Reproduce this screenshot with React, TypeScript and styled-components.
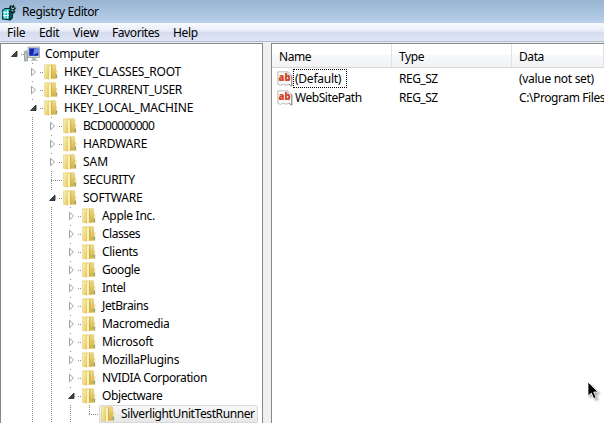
import React from "react";
import styled, { createGlobalStyle, css } from "styled-components";

const GlobalStyle = createGlobalStyle`
  html, body { margin: 0; padding: 0; overflow: hidden; }
  body { font: 12px/18px "Noto Sans", "Open Sans", sans-serif; color: #000; background: #fff; }
  svg { display: block; flex: none; }
`;

const Window = styled.div`
  position: relative;
  display: flex;
  flex-direction: column;
  width: 604px;
  height: 423px;
  overflow: hidden;
`;

const TitleBar = styled.header`
  display: flex;
  align-items: center;
  gap: 5px;
  height: 23px;
  padding: 1px 0 0 1px;
  box-sizing: border-box;
  background: linear-gradient(#98b4d2, #b9d1ea);
`;

const MenuBar = styled.nav`
  display: flex;
  height: 19px;
  padding-left: 7px;
  background: linear-gradient(#fafbfe 0, #e8ecf7 45%, #d6dcee 50%, #dee5f6 100%);
  border-bottom: 1px solid #b6bccc;
  box-sizing: border-box;
`;

const MenuItem = styled.span<{ $w: number; $ls: number }>`
  flex: none;
  width: ${(p) => p.$w}px;
  line-height: 20px;
  letter-spacing: ${(p) => p.$ls}px;
`;

const Text = styled.span<{ $ls?: number }>`
  white-space: pre;
  letter-spacing: ${(p) => p.$ls ?? 0}px;
`;

const Panes = styled.main`
  display: flex;
  flex: 1;
  min-height: 0;
  gap: 8px;
  background: #f0f0f0;
  padding-top: 1px;
`;

const pane = css`
  background: #fff;
  border: 1px solid #828790;
  border-bottom: 0;
  box-sizing: border-box;
  overflow: hidden;
`;

const TreePane = styled.section`
  ${pane}
  width: 263px;
  flex: none;
  padding-top: 1px;
`;

const ListPane = styled.section`
  ${pane}
  flex: 1;
  border-right: 0;
`;

const Row = styled.div`
  display: flex;
  height: 18px;
  padding-left: 3px;
`;

const dotsDown = "repeating-linear-gradient(to bottom, #8c8c8c 0 1px, transparent 1px 2px)";
const dotsAcross = "repeating-linear-gradient(to right, #8c8c8c 0 1px, transparent 1px 2px)";

const Guide = styled.span<{ $line?: boolean; $elbow?: boolean }>`
  flex: none;
  display: flex;
  width: 19px;
  height: 18px;
  background: ${(p) => (p.$line ? dotsDown : "none")} 9px 0 / 1px ${(p) => (p.$elbow ? "10px" : "18px")} no-repeat;
`;

const ToggleBox = styled.span`
  flex: none;
  width: 17px;
  height: 15px;
  margin: 2px 0 1px;
  padding: 1px 0 0 7px;
  box-sizing: border-box;
  background: #fff;
`;

const Stub = styled.span<{ $wide?: boolean }>`
  flex: none;
  width: ${(p) => (p.$wide ? 11 : 3)}px;
  margin: 9px 0 0 ${(p) => (p.$wide ? -10 : -2)}px;
  height: 1px;
  background: ${dotsAcross};
`;

const NodeIcon = styled.span<{ $root?: boolean }>`
  flex: none;
  width: ${(p) => (p.$root ? 17 : 16)}px;
  margin-left: ${(p) => (p.$root ? 0 : 1)}px;
  padding-top: 1px;
`;

const NodeLabel = styled.span<{ $ls: number }>`
  flex: none;
  height: 18px;
  padding: 0 3px 0 4px;
  box-sizing: border-box;
  white-space: pre;
  letter-spacing: ${(p) => p.$ls}px;
`;

const Entry = styled.span<{ $selected?: boolean }>`
  display: flex;
  height: 18px;
  border-radius: 2px;
  ${(p) =>
    p.$selected &&
    css`
      margin-left: -1px;
      padding-left: 1px;
      background: linear-gradient(#f9f9f9, #e6e6e6);
      box-shadow: inset 0 0 0 1px #d9d9d9;
    `}
`;

const ListHeader = styled.div`
  display: grid;
  grid-template-columns: 120px 120px 1fr;
  height: 24px;
  margin-bottom: 1px;
  background: linear-gradient(#fff 0 45%, #f7f8fa 50%, #f1f2f4);
  border-bottom: 1px solid #d5d5d5;
  box-sizing: border-box;
`;

const HeaderCell = styled.div`
  padding: 4px 0 0 7px;
  border-right: 1px solid #e0e2e5;
  letter-spacing: -0.4px;
`;

const ListRow = styled.div`
  display: grid;
  grid-template-columns: 127px 120px 1fr;
  height: 19px;
  align-items: center;
  white-space: nowrap;
`;

const NameCell = styled.div`
  display: flex;
  align-items: center;
  padding-left: 5px;
`;

const ValueName = styled.span<{ $focused?: boolean; $ls: number }>`
  margin-left: 1px;
  padding: 0 5px 0 1px;
  line-height: 17px;
  letter-spacing: ${(p) => p.$ls}px;
  outline: ${(p) => (p.$focused ? "1px dotted #000" : "none")};
`;

const Pointer = styled.svg`
  position: absolute;
  left: 587px;
  top: 381px;
  filter: drop-shadow(2px 2px 1px rgba(0, 0, 0, 0.35));
`;

const RegistryIcon = () => (
  <svg width="16" height="17" viewBox="0 0 16 17">
    <path d="M1 6 4 4 8 4 9 1 11 2 13 0.5 13.5 3 15.5 4 13.5 6 14.5 8 12 10 12 14 9.5 16.5 1 15.5Z" fill="#062c30" />
    <path d="M1.5 7 4 5H9L8 8V15L2 14.5Z" fill="#2fc3c3" />
    <path d="M2 8.5H8M2 11.5H8M4 7v7.5M6.5 6v8.5" stroke="#e2ffff" fill="none" strokeWidth=".9" />
    <path d="M10 3.5 12 5 13 3.5M10.5 6.5l2 .5" stroke="#c9f2f2" fill="none" />
    <path d="M10 9v5" stroke="#0f8f92" />
  </svg>
);

const ComputerIcon = () => (
  <svg width="17" height="16" viewBox="0 0 17 16">
    <path d="M.5 5.5 2.5 4.5 3.5 5.5V15H.5Z" fill="#b8c2c0" stroke="#76837f" strokeWidth=".6" />
    <path d="M1.5 7.5h1" stroke="#52c66a" />
    <path d="M4 1h11.5v10.5H4z" fill="#d6d9d4" stroke="#9a9f9c" strokeWidth=".8" />
    <path d="M5.2 2.3h9.2v7.5H5.2z" fill="#1226b4" />
    <path d="M10.5 2.3h3.9v4.2L9 9Z" fill="#6d8bef" />
    <path d="M8 11.8h4v1.4l2.5 1.6H6.5L8 13.2Z" fill="#b4b9b5" />
  </svg>
);

const FolderIcon = () => (
  <svg width="14" height="16" viewBox="0 0 14 16">
    <defs>
      <linearGradient id="folderFront" x2="1" y2=".6">
        <stop stopColor="#fbf3b8" />
        <stop offset="1" stopColor="#e6ca62" />
      </linearGradient>
      <linearGradient id="folderBack" x2=".4" y2="1">
        <stop stopColor="#f6e9a0" />
        <stop offset="1" stopColor="#d9b443" />
      </linearGradient>
    </defs>
    <path d="M5 .8 11 .3 11.8 1.5V6L13 7v7.5H5Z" fill="url(#folderBack)" stroke="#dcc162" strokeWidth=".4" />
    <path d="M.5.8h4.3l.9 1.2v12.6l-1 .6L.5 14.3Z" fill="url(#folderFront)" stroke="#dec56b" strokeWidth=".5" />
    <path d="M5 2 7.2 1.2V14.6L5 15.6Z" fill="#fbf2c0" />
    <path d="M7.7 1.2v13.6" stroke="#c9a640" strokeWidth=".9" />
    <path d="M12.4 7.5v3" stroke="#fff6d2" strokeWidth=".9" />
    <path d="M12.4 10.8v2.8" stroke="#48a6d2" strokeWidth=".9" />
  </svg>
);

const StringIcon = () => (
  <svg width="16" height="16" viewBox="0 0 16 16">
    <path d="M.8.8H11L14.8 4.2v11l-3-1.8L9 14.2l-2.6-1-2.8 1.2-2.8-1Z" fill="#f8f8f8" stroke="#bcbcbc" />
    <path d="M14.8 4.5v10.7l-3-2" fill="none" stroke="#8f8f8f" />
    <path d="M11 1v3.2h3.6" fill="#fff" stroke="#a6a6a6" strokeWidth=".8" />
    <text
      x="1.5"
      y="10"
      fontFamily="Open Sans, Noto Sans, sans-serif"
      fontWeight="800"
      fontSize="10"
      textLength="12"
      lengthAdjust="spacingAndGlyphs"
      fill="#d5401f"
    >
      ab
    </text>
  </svg>
);

const OpenToggle = () => (
  <svg width="8" height="12" viewBox="0 0 8 12">
    <path d="M6 3v5.5H.5Z" fill="#444" stroke="#222" strokeWidth=".8" />
  </svg>
);

const ClosedToggle = () => (
  <svg width="8" height="12" viewBox="0 0 8 12">
    <path d="M1.5 2.2v7.6l4-3.8Z" fill="#fff" stroke="#a0a0a0" />
  </svg>
);

type Node = { label: string; level: number; state: "open" | "closed" | "leaf"; ls: number };

const nodes: Node[] = [
  { label: "Computer", level: 0, state: "open", ls: -0.32 },
  { label: "HKEY_CLASSES_ROOT", level: 1, state: "closed", ls: -0.24 },
  { label: "HKEY_CURRENT_USER", level: 1, state: "closed", ls: -0.34 },
  { label: "HKEY_LOCAL_MACHINE", level: 1, state: "open", ls: -0.16 },
  { label: "BCD00000000", level: 2, state: "closed", ls: -0.72 },
  { label: "HARDWARE", level: 2, state: "closed", ls: -0.12 },
  { label: "SAM", level: 2, state: "closed", ls: 0 },
  { label: "SECURITY", level: 2, state: "leaf", ls: -0.37 },
  { label: "SOFTWARE", level: 2, state: "open", ls: -0.25 },
  { label: "Apple Inc.", level: 3, state: "closed", ls: -0.3 },
  { label: "Classes", level: 3, state: "closed", ls: -0.5 },
  { label: "Clients", level: 3, state: "closed", ls: -0.28 },
  { label: "Google", level: 3, state: "closed", ls: -0.45 },
  { label: "Intel", level: 3, state: "closed", ls: -0.45 },
  { label: "JetBrains", level: 3, state: "closed", ls: -0.4 },
  { label: "Macromedia", level: 3, state: "closed", ls: -0.3 },
  { label: "Microsoft", level: 3, state: "closed", ls: -0.22 },
  { label: "MozillaPlugins", level: 3, state: "closed", ls: -0.28 },
  { label: "NVIDIA Corporation", level: 3, state: "closed", ls: -0.39 },
  { label: "Objectware", level: 3, state: "open", ls: -0.4 },
  { label: "SilverlightUnitTestRunner", level: 4, state: "leaf", ls: -0.4 },
];

const menus: [string, number, number][] = [
  ["File", 32, -0.2],
  ["Edit", 34, -0.3],
  ["View", 39, -0.1],
  ["Favorites", 61, -0.42],
  ["Help", 40, -0.3],
];

const TreeRow = ({ node }: { node: Node }) => {
  const { label, level, state, ls } = node;
  const selected = level === 4;
  return (
    <Row>
      {Array.from({ length: level }, (_, i) => (
        <Guide key={i} $line={i > 0} />
      ))}
      <Guide $line={level > 0} $elbow={selected}>
        {state !== "leaf" && <ToggleBox>{state === "open" ? <OpenToggle /> : <ClosedToggle />}</ToggleBox>}
      </Guide>
      <Stub $wide={state === "leaf"} />
      <Entry $selected={selected}>
        <NodeIcon $root={level === 0}>{level === 0 ? <ComputerIcon /> : <FolderIcon />}</NodeIcon>
        <NodeLabel $ls={ls}>{label}</NodeLabel>
      </Entry>
    </Row>
  );
};

export default function App() {
  return (
    <Window>
      <GlobalStyle />
      <TitleBar>
        <RegistryIcon />
        <Text $ls={-0.4}>Registry Editor</Text>
      </TitleBar>
      <MenuBar>
        {menus.map(([name, width, ls]) => (
          <MenuItem key={name} $w={width} $ls={ls}>
            {name}
          </MenuItem>
        ))}
      </MenuBar>
      <Panes>
        <TreePane>
          {nodes.map((node) => (
            <TreeRow key={node.label} node={node} />
          ))}
        </TreePane>
        <ListPane>
          <ListHeader>
            <HeaderCell>Name</HeaderCell>
            <HeaderCell>Type</HeaderCell>
            <HeaderCell>Data</HeaderCell>
          </ListHeader>
          <ListRow>
            <NameCell>
              <StringIcon />
              <ValueName $focused $ls={-0.25}>
                (Default)
              </ValueName>
            </NameCell>
            <Text $ls={-0.5}>REG_SZ</Text>
            <Text $ls={-0.3}>(value not set)</Text>
          </ListRow>
          <ListRow>
            <NameCell>
              <StringIcon />
              <ValueName $ls={-0.45}>WebSitePath</ValueName>
            </NameCell>
            <Text $ls={-0.5}>REG_SZ</Text>
            <Text $ls={-0.4}>C:\Program Files</Text>
          </ListRow>
        </ListPane>
      </Panes>
      <Pointer width="13" height="19" viewBox="0 0 13 19">
        <path d="M1 1v14l3.3-3 2.4 5.5 2.4-1-2.4-5.5H11Z" fill="#000" stroke="#fff" strokeWidth=".8" />
      </Pointer>
    </Window>
  );
}
